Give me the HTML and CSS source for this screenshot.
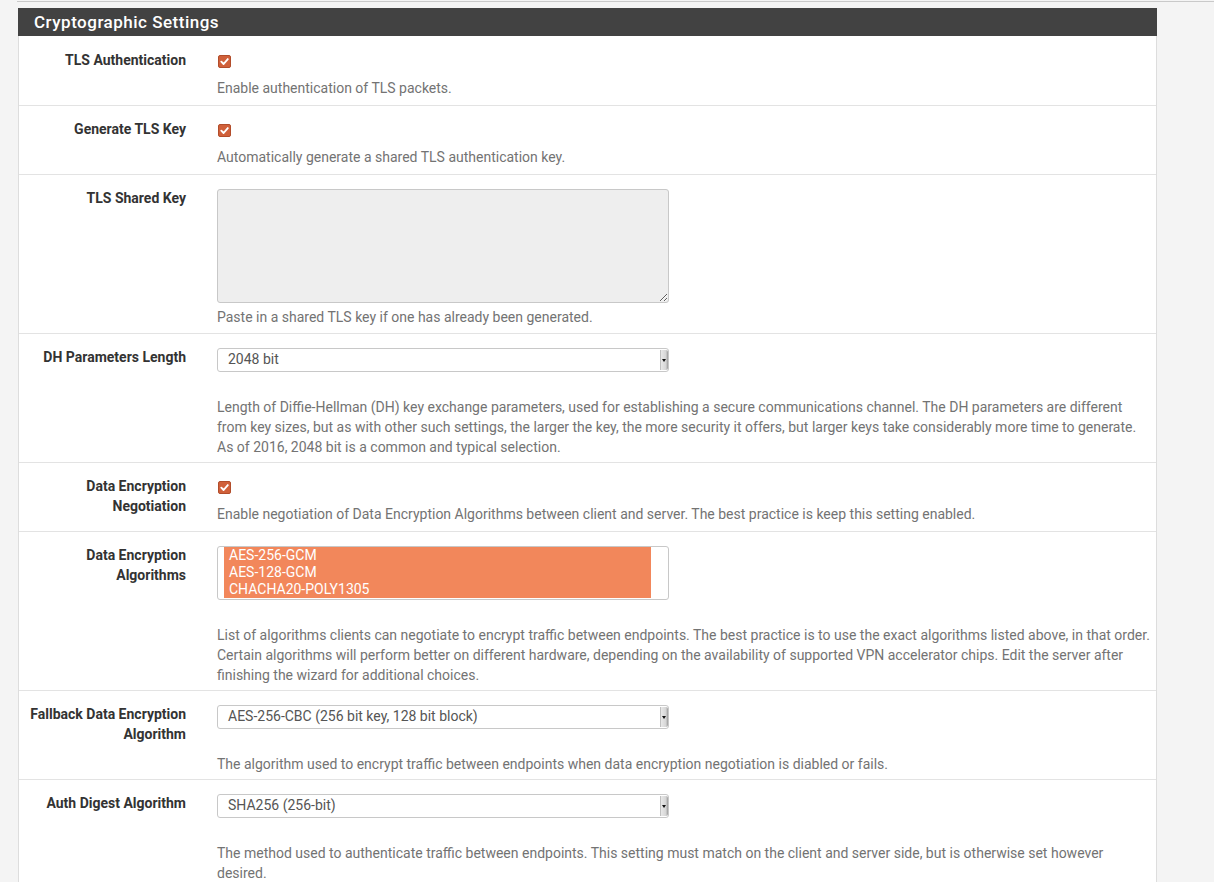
FILE: index.html
```html
<!DOCTYPE html>
<html>
<head>
<meta charset="utf-8">
<title>Cryptographic Settings</title>
<link rel="stylesheet" href="styles.css">
</head>
<body>
<div class="topline"></div>
<div class="panel">
  <div class="panel-heading">Cryptographic Settings</div>
  <div class="panel-body">

    <div class="form-row">
      <div class="label">TLS Authentication</div>
      <div class="content">
        <div class="check-line"><span class="check"><svg viewBox="0 0 13 13" width="13" height="13"><path d="M3.3 6.7 L5.6 9 L9.8 4.1" stroke="#fff" stroke-width="1.9" fill="none" stroke-linecap="round" stroke-linejoin="round"/></svg></span></div>
        <div class="help">Enable authentication of TLS packets.</div>
      </div>
    </div>

    <div class="form-row">
      <div class="label">Generate TLS Key</div>
      <div class="content">
        <div class="check-line"><span class="check"><svg viewBox="0 0 13 13" width="13" height="13"><path d="M3.3 6.7 L5.6 9 L9.8 4.1" stroke="#fff" stroke-width="1.9" fill="none" stroke-linecap="round" stroke-linejoin="round"/></svg></span></div>
        <div class="help">Automatically generate a shared TLS authentication key.</div>
      </div>
    </div>

    <div class="form-row">
      <div class="label">TLS Shared Key</div>
      <div class="content content-textarea">
        <textarea class="textarea" readonly></textarea>
        <div class="help">Paste in a shared TLS key if one has already been generated.</div>
      </div>
    </div>

    <div class="form-row">
      <div class="label">DH Parameters Length</div>
      <div class="content content-select">
        <div class="select"><span class="select-text">2048 bit</span><span class="arrow"></span></div>
        <div class="help after-select">Length of Diffie-Hellman (DH) key exchange parameters, used for establishing a secure communications channel. The DH parameters are different from key sizes, but as with other such settings, the larger the key, the more security it offers, but larger keys take considerably more time to generate. As of 2016, 2048 bit is a common and typical selection.</div>
      </div>
    </div>

    <div class="form-row">
      <div class="label">Data Encryption<br>Negotiation</div>
      <div class="content">
        <div class="check-line"><span class="check"><svg viewBox="0 0 13 13" width="13" height="13"><path d="M3.3 6.7 L5.6 9 L9.8 4.1" stroke="#fff" stroke-width="1.9" fill="none" stroke-linecap="round" stroke-linejoin="round"/></svg></span></div>
        <div class="help">Enable negotiation of Data Encryption Algorithms between client and server. The best practice is keep this setting enabled.</div>
      </div>
    </div>

    <div class="form-row">
      <div class="label">Data Encryption<br>Algorithms</div>
      <div class="content content-select">
        <div class="listbox">
          <div class="option selected">AES-256-GCM</div>
          <div class="option selected">AES-128-GCM</div>
          <div class="option selected">CHACHA20-POLY1305</div>
        </div>
        <div class="help after-select">List of algorithms clients can negotiate to encrypt traffic between endpoints. The best practice is to use the exact algorithms listed above, in that order. Certain algorithms will perform better on different hardware, depending on the availability of supported VPN accelerator chips. Edit the server after finishing the wizard for additional choices.</div>
      </div>
    </div>

    <div class="form-row">
      <div class="label">Fallback Data Encryption<br>Algorithm</div>
      <div class="content content-select">
        <div class="select"><span class="select-text">AES-256-CBC (256 bit key, 128 bit block)</span><span class="arrow"></span></div>
        <div class="help after-select">The algorithm used to encrypt traffic between endpoints when data encryption negotiation is diabled or fails.</div>
      </div>
    </div>

    <div class="form-row">
      <div class="label">Auth Digest Algorithm</div>
      <div class="content content-select">
        <div class="select"><span class="select-text">SHA256 (256-bit)</span><span class="arrow"></span></div>
        <div class="help after-select">The method used to authenticate traffic between endpoints. This setting must match on the client and server side, but is otherwise set however desired.</div>
      </div>
    </div>

  </div>
</div>
</body>
</html>
```

FILE: styles.css
```css
html, body {
  margin: 0;
  padding: 0;
}
body {
  background: #f4f4f4;
  font-family: Roboto, "Liberation Sans", Arial, sans-serif;
  font-size: 14px;
  line-height: 20px;
  color: #333;
}
.topline {
  height: 1px;
  margin-top: 1px;
  margin-left: 17px;
  background: #c9c9c9;
}
.panel {
  margin: 6px 0 0 18px;
  width: 1139px;
  box-sizing: border-box;
  background: #fff;
  border-left: 1px solid #ddd;
  border-right: 1px solid #ddd;
}
.panel-heading {
  background: #424242;
  color: #fff;
  height: 28px;
  line-height: 28px;
  margin: 0 -1px;
  padding-left: 16px;
  font-size: 17px;
  font-weight: 500;
  letter-spacing: 0.5px;
}
.form-row {
  display: grid;
  grid-template-columns: 182px 1fr;
  border-top: 1px solid #e3e3e3;
}
.form-row:first-child {
  border-top: 1px solid #fff;
}
.label {
  text-align: right;
  font-weight: 700;
  color: #333;
  padding: 13px 15px 0 0;
}
.content {
  padding: 13px 4px 7px 16px;
}
.content-textarea {
  padding-bottom: 6px;
}
.content-select {
  padding-bottom: 5px;
}
.check-line {
  height: 20px;
  display: flex;
  align-items: center;
  padding-left: 1px;
  margin: 1px 0 7px 0;
}
.check {
  display: block;
  width: 13px;
  height: 13px;
  box-sizing: border-box;
  background: #d0603a;
  border: 1px solid #b24d2b;
  border-radius: 2px;
  position: relative;
}
.check svg {
  position: absolute;
  left: -1px;
  top: -1px;
}
.help {
  color: #737373;
}
.textarea {
  display: block;
  width: 452px;
  height: 114px;
  box-sizing: border-box;
  margin: 1px 0 4px 0;
  background: #eee;
  border: 1px solid #c8c8c8;
  border-radius: 3px;
  resize: both;
  font-family: inherit;
  padding: 6px 10px;
  outline: none;
}
.select {
  width: 452px;
  height: 24px;
  box-sizing: border-box;
  margin-top: 1px;
  border: 1px solid #c8c8c8;
  border-radius: 3px;
  background: #fff;
  display: flex;
  align-items: stretch;
  justify-content: space-between;
  color: #555;
}
.select-text {
  padding-left: 10px;
  line-height: 21px;
}
.arrow {
  width: 7px;
  margin: 1px 0;
  background: linear-gradient(to right, #e8e8e8, #d6d6d6 70%, #9a9a9a);
  border-left: 1px solid #c0c0c0;
  border-radius: 0 2px 2px 0;
  position: relative;
}
.arrow::after {
  content: "";
  position: absolute;
  left: 1px;
  top: 9px;
  border-left: 2.5px solid transparent;
  border-right: 2.5px solid transparent;
  border-top: 3px solid #111;
}
.after-select {
  margin-top: 25px;
}
.listbox {
  width: 452px;
  box-sizing: border-box;
  margin-top: 1px;
  border: 1px solid #c8c8c8;
  border-radius: 3px;
  padding: 0 17px 1px 6px;
  background: #fff;
}
.option {
  line-height: 17px;
  padding-left: 5px;
  color: #fff;
}
.option.selected {
  background: #f2875b;
}
```
